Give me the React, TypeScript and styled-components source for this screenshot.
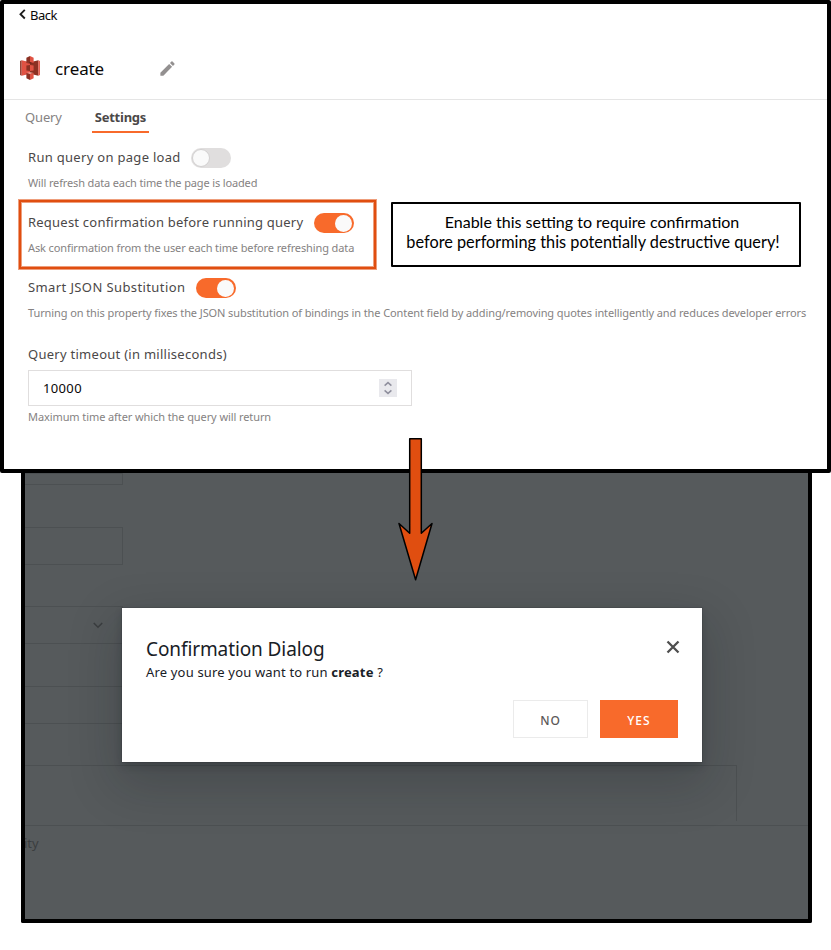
import React from "react";
import styled, { createGlobalStyle } from "styled-components";
import { MdEdit } from "react-icons/md";

const GlobalStyle = createGlobalStyle`
  *, *::before, *::after { box-sizing: border-box; }
  body {
    margin: 0;
    background: #fff;
    font-family: "Noto Sans", "Open Sans", sans-serif;
    font-size: 13px;
    color: #4b4848;
  }
`;

const Page = styled.main`
  position: relative;
  width: 831px;
  height: 950px;
  overflow: hidden;
`;

/* ---------- query editor panel ---------- */

const EditorPanel = styled.section`
  position: relative;
  z-index: 1;
  display: flex;
  flex-direction: column;
  height: 473px;
  border: 4px solid #000;
  border-radius: 2px;
  background: #fff;
`;

const EditorHeader = styled.header`
  display: flex;
  flex-direction: column;
  height: 96px;
  border-bottom: 1px solid #e5e5e5;
`;

const BackLink = styled.a`
  display: flex;
  align-items: center;
  gap: 4px;
  height: 22px;
  padding-left: 15px;
  color: #090707;
  letter-spacing: -0.5px;
`;

const TitleRow = styled.div`
  display: flex;
  align-items: center;
  height: 24px;
  margin-top: 30px;
  padding-left: 16px;
`;

const QueryName = styled.h1`
  width: 103px;
  margin: 2px 0 0 15px;
  font-size: 17px;
  font-weight: 400;
  line-height: 24px;
  letter-spacing: -0.1px;
  color: #090707;
`;

const EditIcon = styled(MdEdit)`
  width: 19px;
  height: 19px;
  color: #939090;
`;

const Tabs = styled.nav`
  display: flex;
  height: 33px;
  gap: 27px;
  padding-left: 18px;
`;

const Tab = styled.a<{ $active?: boolean }>`
  padding: 7px 3px 0;
  line-height: 20px;
  color: ${(p) => (p.$active ? "#4b4848" : "#858282")};
  font-weight: ${(p) => (p.$active ? 700 : 400)};
  letter-spacing: ${(p) => (p.$active ? "-0.25px" : "-0.15px")};
  border-bottom: 2px solid ${(p) => (p.$active ? "#f86a2b" : "transparent")};
`;

const Setting = styled.div<{ $top?: number }>`
  display: flex;
  flex-direction: column;
  gap: 7px;
  padding: ${(p) => p.$top ?? 15}px 0 8px 24px;
`;

const LabelRow = styled.div`
  display: flex;
  align-items: center;
  gap: 10px;
  height: 20px;
`;

const Label = styled.span<{ $tracking: number }>`
  margin-top: -2px;
  padding-right: 0.6px;
  line-height: 20px;
  white-space: nowrap;
  letter-spacing: ${(p) => p.$tracking}px;
`;

const Helper = styled.span<{ $tracking: number }>`
  font-size: 11px;
  line-height: 16px;
  white-space: nowrap;
  color: #858282;
  letter-spacing: ${(p) => p.$tracking}px;
`;

const Toggle = styled.span<{ $on?: boolean }>`
  display: flex;
  align-items: center;
  justify-content: ${(p) => (p.$on ? "flex-end" : "flex-start")};
  width: 40px;
  height: 20px;
  padding: 0 ${(p) => (p.$on ? 2 : 1)}px;
  border-radius: 10px;
  background: ${(p) => (p.$on ? "#f86a2b" : "#e0dede")};

  &::before {
    content: "";
    width: ${(p) => (p.$on ? 17 : 18)}px;
    height: ${(p) => (p.$on ? 17 : 18)}px;
    border-radius: 50%;
    border: ${(p) => (p.$on ? "0" : "1px solid #d2d0d0")};
    background: #fafafa;
  }
`;

const HighlightRow = styled.div`
  display: flex;
  align-items: flex-start;
  gap: 15px;
  height: 71px;
  padding-left: 15px;
`;

const Highlight = styled.div`
  width: 357px;
  height: 69px;
  margin-top: 1px;
  border: 2px solid #e04e10;
  box-shadow:
    0 0 0 1px rgba(224, 78, 16, 0.55),
    inset 0 0 0 1px rgba(224, 78, 16, 0.55);
`;

const Callout = styled.p`
  width: 410px;
  height: 65px;
  margin: 3px 0 0;
  padding-top: 8px;
  border: 2px solid #000;
  border-radius: 1px;
  font-family: Lato, sans-serif;
  line-height: 20px;
  text-align: center;
  color: #000;
`;

const CalloutLine = styled.span<{ $size: number; $shift: number }>`
  display: block;
  padding-right: ${(p) => p.$shift}px;
  font-size: ${(p) => p.$size}px;
`;

const TimeoutField = styled.div`
  display: flex;
  flex-direction: column;
  padding: 17px 0 0 24px;
`;

const NumberInput = styled.div`
  display: flex;
  align-items: center;
  justify-content: space-between;
  width: 384px;
  height: 36px;
  margin: 6px 0 3px;
  padding: 0 14px;
  border: 1px solid #e0dede;
  color: #090707;
  letter-spacing: 0.35px;
`;

const Stepper = styled.span`
  display: flex;
  width: 18px;
  height: 18px;
  background: #e9e9ed;
`;

const Arrow = styled.svg`
  position: absolute;
  z-index: 2;
  left: 396px;
  top: 436px;
`;

/* ---------- dimmed page with the dialog ---------- */

const Stage = styled.section`
  display: grid;
  width: 791px;
  height: 450px;
  margin-left: 21px;
  border: solid #000;
  border-width: 0 4px 4px;
  border-radius: 0 0 2px 2px;
  background: #565a5c;
`;

const Dimmed = styled.div`
  grid-area: 1 / 1;
  display: flex;
  flex-direction: column;
  overflow: hidden;
  color: #3b3e40;
`;

const GhostField = styled.div<{ $h: number; $gap?: number; $w?: number; $open?: boolean }>`
  display: flex;
  align-items: center;
  justify-content: flex-end;
  flex: none;
  width: ${(p) => p.$w ?? 98}px;
  height: ${(p) => p.$h}px;
  margin-top: ${(p) => p.$gap ?? 0}px;
  padding-right: 19px;
  border: 1px solid #4c5052;
  border-left: 0;
  ${(p) => p.$open && "border-bottom: 0;"}
`;

const GhostFooter = styled.div`
  margin-top: 4px;
  padding-top: 7px;
  border-top: 1px solid #4c5052;
  line-height: 20px;
  text-indent: -1px;
`;

const Dialog = styled.div`
  grid-area: 1 / 1;
  display: flex;
  flex-direction: column;
  justify-content: space-between;
  width: 580px;
  height: 154px;
  margin: 135px 0 0 97px;
  padding: 28px 24px 24px;
  background: #fff;
  color: #182026;
  box-shadow:
    0 0 0 1px rgba(16, 22, 26, 0.1),
    0 4px 8px rgba(16, 22, 26, 0.2),
    0 18px 46px 6px rgba(16, 22, 26, 0.2);
`;

const DialogTop = styled.div`
  display: flex;
  justify-content: space-between;
`;

const DialogTitle = styled.h2`
  margin: 0;
  font-size: 19px;
  font-weight: 400;
  line-height: 26px;
  letter-spacing: -0.1px;
`;

const DialogText = styled.p`
  margin: 0;
  line-height: 20px;
  letter-spacing: 0.17px;
`;

const CloseIcon = styled.svg`
  margin: 4px -2px 0 0;
`;

const Actions = styled.div`
  display: flex;
  justify-content: flex-end;
  gap: 12px;
`;

const Button = styled.button<{ $primary?: boolean }>`
  width: ${(p) => (p.$primary ? 78 : 75)}px;
  height: 38px;
  padding: 2px 0 0;
  border: 1px solid ${(p) => (p.$primary ? "#f86a2b" : "#ebebeb")};
  background: ${(p) => (p.$primary ? "#f86a2b" : "#fff")};
  color: ${(p) => (p.$primary ? "#fff" : "#5c5858")};
  font: 500 12px "Noto Sans", sans-serif;
  letter-spacing: 1px;
`;

const S3Logo = () => (
  <svg width="20" height="24" viewBox="0 0 256 310">
    <path fill="#8C3123" d="M20.6 53.7 0 64v181l20.6 10.3z" />
    <path fill="#E05243" d="M131 229 20.6 255.3V53.7L131 79.4z" />
    <path fill="#8C3123" d="m81.2 187.9 46.8 5.9.5-77.5-.5-.6-46.8 5.9z" />
    <path fill="#8C3123" d="m128 229.3 107.4 26V53.7L128 79.7z" />
    <path fill="#E05243" d="m174.8 187.9-46.8 5.9v-78.1l46.8 5.9z" />
    <path fill="#5E1F18" d="M174.8 89.6 128 98.2l-46.8-8.6L128 77.4z" />
    <path fill="#F2B0A9" d="m174.8 219.8-46.8-8.6-46.8 8.6 46.8 13z" />
    <path fill="#8C3123" d="M81.2 89.6 128 78V0L81.2 23.4z" />
    <path fill="#E05243" d="M174.8 89.6 128 78V0l46.8 23.4z" />
    <path fill="#8C3123" d="m128 309.4-46.8-23.4v-66.2l46.8 11.6z" />
    <path fill="#E05243" d="m128 309.4 46.8-23.4v-66.2L128 231.4z" />
    <path fill="#E05243" d="M235.4 255.3 256 245V64l-20.6-10.3z" />
  </svg>
);

interface ToggleSettingProps {
  label: string;
  helper: string;
  on?: boolean;
  top?: number;
  labelTracking: number;
  helperTracking: number;
}

const ToggleSetting = ({ label, helper, on, top, labelTracking, helperTracking }: ToggleSettingProps) => (
  <Setting $top={top}>
    <LabelRow>
      <Label $tracking={labelTracking}>{label}</Label>
      <Toggle $on={on} role="switch" aria-checked={!!on} />
    </LabelRow>
    <Helper $tracking={helperTracking}>{helper}</Helper>
  </Setting>
);

const HighlightedSetting = styled(Highlight)`
  ${Setting} {
    padding: 11px 0 0 7px;
  }
`;

export default function App() {
  return (
    <Page>
      <GlobalStyle />
      <EditorPanel>
        <EditorHeader>
          <BackLink>
            <svg width="7" height="12" viewBox="0 0 7 12" fill="none" stroke="#1c1c1c" strokeWidth="1.9">
              <path d="M5.8.9 1.5 5.2l4.3 4.3" />
            </svg>
            Back
          </BackLink>
          <TitleRow>
            <S3Logo />
            <QueryName>create</QueryName>
            <EditIcon />
          </TitleRow>
        </EditorHeader>
        <Tabs>
          <Tab>Query</Tab>
          <Tab $active>Settings</Tab>
        </Tabs>
        <ToggleSetting
          label="Run query on page load"
          helper="Will refresh data each time the page is loaded"
          labelTracking={0.3}
          helperTracking={-0.14}
        />
        <HighlightRow>
          <HighlightedSetting>
            <ToggleSetting
              on
              label="Request confirmation before running query"
              helper="Ask confirmation from the user each time before refreshing data"
              labelTracking={0.22}
              helperTracking={-0.115}
            />
          </HighlightedSetting>
          <Callout>
            <CalloutLine $size={16.05} $shift={8}>Enable this setting to require confirmation</CalloutLine>
            <CalloutLine $size={16.3} $shift={6}>before performing this potentially destructive query!</CalloutLine>
          </Callout>
        </HighlightRow>
        <ToggleSetting
          on
          top={8}
          label="Smart JSON Substitution"
          helper="Turning on this property fixes the JSON substitution of bindings in the Content field by adding/removing quotes intelligently and reduces developer errors"
          labelTracking={0.395}
          helperTracking={-0.096}
        />
        <TimeoutField>
          <Label $tracking={0.27}>Query timeout (in milliseconds)</Label>
          <NumberInput>
            10000
            <Stepper>
              <svg width="18" height="18" fill="none" stroke="#8f8f9d" strokeWidth="1.5">
                <path d="M5.6 6.6 9 3.6l3.4 3M5.6 11.4l3.4 3 3.4-3" />
              </svg>
            </Stepper>
          </NumberInput>
          <Helper $tracking={-0.09}>Maximum time after which the query will return</Helper>
        </TimeoutField>
      </EditorPanel>

      <Stage>
        <Dimmed>
          <GhostField $h={12} />
          <GhostField $h={38} $gap={42} />
          <GhostField $h={38} $gap={41}>
            <svg width="10" height="7" fill="none" stroke="#3b3e40" strokeWidth="1.6">
              <path d="M.8 1 5 5.2 9.2 1" />
            </svg>
          </GhostField>
          <GhostField $h={38} $gap={42} />
          <GhostField $h={56} $gap={41} $w={712} $open />
          <GhostFooter>ity</GhostFooter>
        </Dimmed>
        <Dialog role="dialog">
          <div>
            <DialogTop>
              <DialogTitle>Confirmation Dialog</DialogTitle>
              <CloseIcon width="14" height="14" fill="none" stroke="#4f4f4f" strokeWidth="2.3">
                <path d="m1.5 1.5 11 11m0-11-11 11" />
              </CloseIcon>
            </DialogTop>
            <DialogText>
              Are you sure you want to run <b>create</b> ?
            </DialogText>
          </div>
          <Actions>
            <Button>NO</Button>
            <Button $primary>YES</Button>
          </Actions>
        </Dialog>
      </Stage>

      <Arrow width="40" height="148" viewBox="0 0 40 148">
        <path
          d="M13.7 2.7h11.6v94.6L36 87.5 19.6 143.8 3 87.5l10.7 9.8z"
          fill="#e04e10"
          stroke="#000"
          strokeWidth="1.5"
          strokeLinejoin="round"
        />
      </Arrow>
    </Page>
  );
}
